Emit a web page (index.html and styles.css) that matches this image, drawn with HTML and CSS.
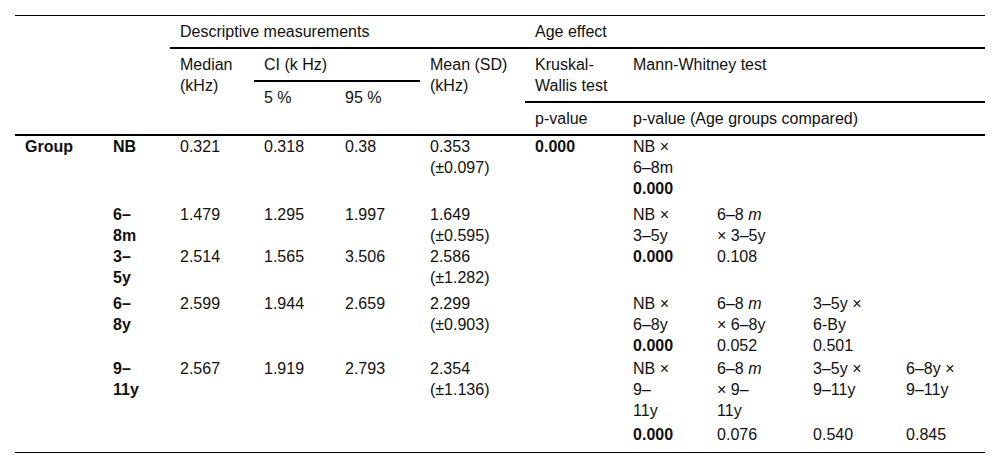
FILE: index.html
```html
<!DOCTYPE html>
<html lang="en">
<head>
<meta charset="utf-8">
<title>Table</title>
<link rel="stylesheet" href="styles.css">
</head>
<body>
<div class="page">
<table class="data">
  <colgroup>
    <col class="c-group"><col class="c-age"><col class="c-median"><col class="c-ci5"><col class="c-ci95"><col class="c-mean"><col class="c-kw"><col class="c-mw1"><col class="c-mw2"><col class="c-mw3"><col class="c-mw4">
  </colgroup>
  <thead>
    <tr class="h1">
      <th colspan="2"></th>
      <th colspan="4" class="rule">Descriptive measurements</th>
      <th colspan="5" class="rule">Age effect</th>
    </tr>
    <tr class="h2">
      <th colspan="2" rowspan="3" class="rule"></th>
      <th rowspan="3" class="rule">Median<br>(kHz)</th>
      <th colspan="2" class="rule">CI (k Hz)</th>
      <th rowspan="3" class="rule">Mean (SD)<br>(kHz)</th>
      <th rowspan="2" class="rule">Kruskal-<br>Wallis test</th>
      <th colspan="4" rowspan="2" class="rule">Mann-Whitney test</th>
    </tr>
    <tr class="h3">
      <th rowspan="2" class="rule">5 %</th>
      <th rowspan="2" class="rule">95 %</th>
    </tr>
    <tr class="h4">
      <th class="rule">p-value</th>
      <th colspan="4" class="rule">p-value (Age groups compared)</th>
    </tr>
  </thead>
  <tbody>
    <tr>
      <td class="b">Group</td>
      <td class="b">NB</td>
      <td>0.321</td>
      <td>0.318</td>
      <td>0.38</td>
      <td>0.353<br>(±0.097)</td>
      <td class="b">0.000</td>
      <td>NB ×<br>6–8m</td>
      <td></td><td></td><td></td>
    </tr>
    <tr class="pv">
      <td></td><td></td><td></td><td></td><td></td><td></td><td></td>
      <td class="b">0.000</td>
      <td></td><td></td><td></td>
    </tr>
    <tr>
      <td></td>
      <td class="b">6–<br>8m</td>
      <td>1.479</td>
      <td>1.295</td>
      <td>1.997</td>
      <td>1.649<br>(±0.595)</td>
      <td></td>
      <td>NB ×<br>3–5y</td>
      <td>6–8 <i>m</i><br>× 3–5y</td>
      <td></td><td></td>
    </tr>
    <tr class="pv">
      <td></td>
      <td class="b">3–<br>5y</td>
      <td>2.514</td>
      <td>1.565</td>
      <td>3.506</td>
      <td>2.586<br>(±1.282)</td>
      <td></td>
      <td class="b">0.000</td>
      <td>0.108</td>
      <td></td><td></td>
    </tr>
    <tr>
      <td></td>
      <td class="b">6–<br>8y</td>
      <td>2.599</td>
      <td>1.944</td>
      <td>2.659</td>
      <td>2.299<br>(±0.903)</td>
      <td></td>
      <td>NB ×<br>6–8y</td>
      <td>6–8 <i>m</i><br>× 6–8y</td>
      <td>3–5y ×<br>6-By</td>
      <td></td>
    </tr>
    <tr class="pv tight">
      <td></td><td></td><td></td><td></td><td></td><td></td><td></td>
      <td class="b">0.000</td>
      <td>0.052</td>
      <td>0.501</td>
      <td></td>
    </tr>
    <tr>
      <td></td>
      <td class="b">9–<br>11y</td>
      <td>2.567</td>
      <td>1.919</td>
      <td>2.793</td>
      <td>2.354<br>(±1.136)</td>
      <td></td>
      <td>NB ×<br>9–<br>11y</td>
      <td>6–8 <i>m</i><br>× 9–<br>11y</td>
      <td>3–5y ×<br>9–11y</td>
      <td>6–8y ×<br>9–11y</td>
    </tr>
    <tr class="pv last">
      <td></td><td></td><td></td><td></td><td></td><td></td><td></td>
      <td class="b">0.000</td>
      <td>0.076</td>
      <td>0.540</td>
      <td>0.845</td>
    </tr>
  </tbody>
</table>
</div>
</body>
</html>
```

FILE: styles.css
```css
html, body {
  margin: 0;
  padding: 0;
  background: #fff;
}

.page {
  padding: 15px 15px 0 15px;
}

.data {
  width: 970px;
  table-layout: fixed;
  border-collapse: separate;
  border-spacing: 0;
  border-top: 1px solid #000;
  border-bottom: 1px solid #000;
  font-family: "Liberation Sans", Arial, sans-serif;
  font-size: 16px;
  line-height: 21px;
  color: #111;
}

.c-group { width: 88px; }
.c-age { width: 67px; }
.c-median { width: 84px; }
.c-ci5 { width: 81px; }
.c-ci95 { width: 85px; }
.c-mean { width: 105px; }
.c-kw { width: 98px; }
.c-mw1 { width: 84px; }
.c-mw2 { width: 96px; }
.c-mw3 { width: 93px; }
.c-mw4 { width: 89px; }

.data th {
  font-weight: normal;
  text-align: left;
  vertical-align: top;
  padding: 5px 10px;
}

.data th.rule {
  border-bottom: 2px solid #000;
}

.h1 { height: 33px; }
.h2 { height: 33px; }
.h3 { height: 21px; }
.h4 { height: 33px; }

.data td {
  text-align: left;
  vertical-align: top;
  padding: 0 10px;
  white-space: nowrap;
}

.data tr.pv td {
  padding-bottom: 5px;
}

.data tr.tight td {
  padding-bottom: 2px;
}

.data tr.last td {
  padding-top: 3px;
  padding-bottom: 7px;
}

.data .b {
  font-weight: bold;
}
```
